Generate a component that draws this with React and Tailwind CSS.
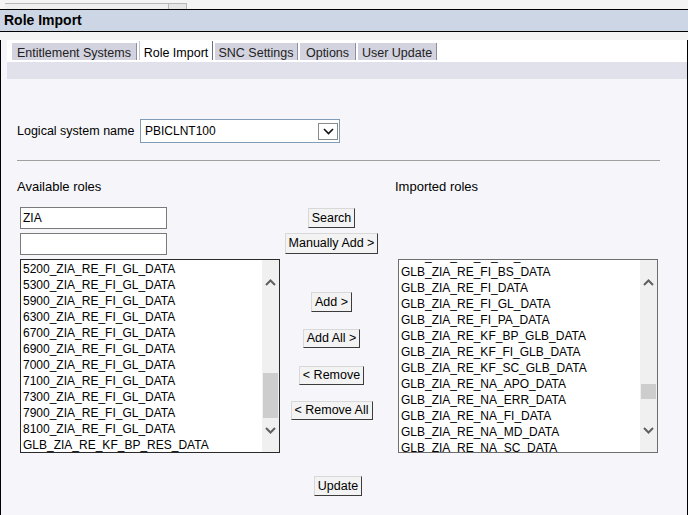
import React from 'react'

const LEFT_ROLES = [
  '5200_ZIA_RE_FI_GL_DATA',
  '5300_ZIA_RE_FI_GL_DATA',
  '5900_ZIA_RE_FI_GL_DATA',
  '6300_ZIA_RE_FI_GL_DATA',
  '6700_ZIA_RE_FI_GL_DATA',
  '6900_ZIA_RE_FI_GL_DATA',
  '7000_ZIA_RE_FI_GL_DATA',
  '7100_ZIA_RE_FI_GL_DATA',
  '7300_ZIA_RE_FI_GL_DATA',
  '7900_ZIA_RE_FI_GL_DATA',
  '8100_ZIA_RE_FI_GL_DATA',
  'GLB_ZIA_RE_KF_BP_RES_DATA',
]

const RIGHT_ROLES = [
  'GLB_ZIA_RE_FI_AP_DATA',
  'GLB_ZIA_RE_FI_BS_DATA',
  'GLB_ZIA_RE_FI_DATA',
  'GLB_ZIA_RE_FI_GL_DATA',
  'GLB_ZIA_RE_FI_PA_DATA',
  'GLB_ZIA_RE_KF_BP_GLB_DATA',
  'GLB_ZIA_RE_KF_FI_GLB_DATA',
  'GLB_ZIA_RE_KF_SC_GLB_DATA',
  'GLB_ZIA_RE_NA_APO_DATA',
  'GLB_ZIA_RE_NA_ERR_DATA',
  'GLB_ZIA_RE_NA_FI_DATA',
  'GLB_ZIA_RE_NA_MD_DATA',
  'GLB_ZIA_RE_NA_SC_DATA',
]

const TABS = [
  { label: 'Entitlement Systems', width: 'w-[125px]' },
  { label: 'Role Import', width: 'w-[74px]', active: true },
  { label: 'SNC Settings', width: 'w-[83px]' },
  { label: 'Options', width: 'w-[56px]' },
  { label: 'User Update', width: 'w-[79px]' },
]

function Chevron({ up, color = '#606060', width = 2 }) {
  return (
    <svg width="11" height="7" viewBox="0 0 11 7">
      <path
        d={up ? 'M1 6 L5.5 1.5 L10 6' : 'M1 1 L5.5 5.5 L10 1'}
        fill="none"
        stroke={color}
        strokeWidth={width}
      />
    </svg>
  )
}

function Btn({ children, className = '' }) {
  return (
    <button
      type="button"
      className={`px-[3px] bg-[#f3f3f3] border border-t-[#d8d8d8] border-l-[#d8d8d8] border-r-[#3c3c3c] border-b-[#3c3c3c] text-[12.5px] leading-none text-black whitespace-nowrap ${className}`}
    >
      {children}
    </button>
  )
}

function ListBox({ items, border, scrollClass, thumbTop, thumbHeight, downGap }) {
  return (
    <div className={`flex w-[260px] h-[194px] bg-white border ${border}`}>
      <div className="flex-1 overflow-hidden pl-[2px]">
        <div className={scrollClass}>
          {items.map((r) => (
            <div key={r} className="h-[16px] leading-[16px] text-[12px] whitespace-nowrap">
              {r}
            </div>
          ))}
        </div>
      </div>
      {/* scrollbar */}
      <div className="w-[17px] bg-[#f0f0f0] flex flex-col items-center">
        <div className="mt-[19px] h-[7px]">
          <Chevron up />
        </div>
        <div className={`w-[15px] bg-[#cdcdcd] ${thumbTop} ${thumbHeight}`} />
        <div className={`${downGap} h-[7px]`}>
          <Chevron />
        </div>
      </div>
    </div>
  )
}

export default function App() {
  return (
    <div className="w-[688px] h-[515px] overflow-hidden bg-[#f4f4f4] font-['Liberation_Sans',Arial,sans-serif] text-black">
      {/* window chrome strip */}
      <div className="h-[9px] pl-[5px] pt-[3px] flex">
        <div className="w-[163px] h-[6px] border-t border-[#b8b8b8] bg-[#efefef]" />
        <div className="w-[19px] h-[6px] border border-b-0 border-[#b8b8b8] bg-[#e6e6e6]" />
      </div>

      {/* title bar */}
      <div className="h-[23px] border-y border-black bg-[#cdd6e4] pl-[4px] flex items-center text-[14px] font-bold">
        Role Import
      </div>

      {/* panel */}
      <div className="h-[481px] border-x border-b border-black bg-[#f6f6fa]">
        {/* tabs */}
        <div className="mt-[8px] ml-[6px] h-[22px] bg-white flex items-start pl-[5px] gap-[2px]">
          {TABS.map((t) =>
            t.active ? (
              <div
                key={t.label}
                className={`${t.width} mt-[1px] h-[19px] pt-[4px] bg-white border-l border-l-[#c6c6d2] border-r border-r-[#6e6e7e] text-[12.5px] leading-[16px] text-center`}
              >
                {t.label}
              </div>
            ) : (
              <div
                key={t.label}
                className={`${t.width} mt-[3px] h-[17px] pt-[2px] bg-[#d3d3df] border-r border-r-[#8e8e9e] text-[12.5px] leading-[16px] text-center text-[#222]`}
              >
                {t.label}
              </div>
            )
          )}
        </div>
        <div className="ml-[6px] h-[17px] bg-[#e1e1eb]" />

        {/* logical system */}
        <div className="mt-[40px] pl-[16px] flex items-center">
          <div className="w-[123px] text-[12.5px]">Logical system name</div>
          <div className="w-[200px] h-[24px] border border-[#7f9db9] bg-white flex items-center justify-between pl-[4px] pr-[1px]">
            <span className="text-[12px]">PBICLNT100</span>
            <div className="w-[20px] h-[17px] border border-[#8a8a8a] bg-white flex items-center justify-center">
              <Chevron color="#111" width={1.6} />
            </div>
          </div>
        </div>

        <div className="mt-[17px] ml-[16px] w-[643px] h-px bg-[#a0a0a0]" />

        {/* roles */}
        <div className="mt-[18px] pl-[16px] grid grid-cols-[263px_103px_1fr]">
          <div className="h-[16px] leading-[16px] text-[13px]">Available roles</div>
          <div />
          <div className="h-[16px] leading-[16px] text-[13px] pl-[12px]">Imported roles</div>

          <div className="pt-[12px] pl-[3px] flex flex-col gap-[4px]">
            <div className="w-[147px] h-[22px] border border-[#7a7a7a] bg-white pl-[2px] text-[12px] leading-[20px]">
              ZIA
            </div>
            <div className="w-[147px] h-[22px] border border-[#7a7a7a] bg-white" />
          </div>
          <div className="pt-[13px] flex flex-col items-center">
            <Btn className="h-[20px]">Search</Btn>
            <Btn className="mt-[5px] h-[21px]">Manually Add &gt;</Btn>
          </div>
          <div />

          <div className="pt-[4px] pl-[3px]">
            <ListBox
              items={LEFT_ROLES}
              border="border-[#2a2a2a]"
              scrollClass="mt-[1px]"
              thumbTop="mt-[87px]"
              thumbHeight="h-[45px]"
              downGap="mt-[9px]"
            />
          </div>
          <div className="pt-[37px] flex flex-col items-center">
            <Btn className="h-[20px]">Add &gt;</Btn>
            <Btn className="mt-[17px] h-[19px]">Add All &gt;</Btn>
            <Btn className="mt-[18px] h-[19px]">&lt; Remove</Btn>
            <Btn className="mt-[16px] h-[19px]">&lt; Remove All</Btn>
          </div>
          <div className="pt-[4px] pl-[15px]">
            <ListBox
              items={RIGHT_ROLES}
              border="border-[#6e6e6e]"
              scrollClass="-mt-[12px]"
              thumbTop="mt-[98px]"
              thumbHeight="h-[15px]"
              downGap="mt-[28px]"
            />
          </div>

          <div />
          <div className="pt-[23px] pl-[13px] flex justify-center">
            <Btn className="h-[20px]">Update</Btn>
          </div>
          <div />
        </div>
      </div>
    </div>
  )
}
